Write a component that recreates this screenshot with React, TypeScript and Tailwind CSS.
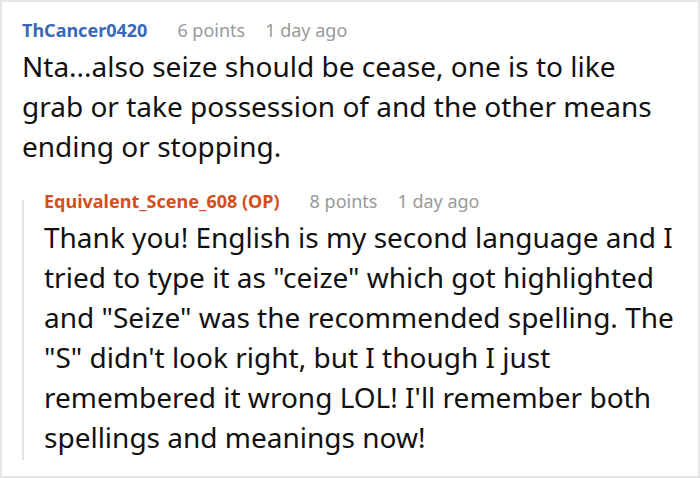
import React from 'react';

const font = { fontFamily: '"Noto Sans", "Open Sans", sans-serif' };

interface CommentHeaderProps {
  author: string;
  authorColor: string;
  points: string;
  time: string;
}

const CommentHeader: React.FC<CommentHeaderProps> = ({ author, authorColor, points, time }) => (
  <div className="flex items-baseline h-[24px] text-[18px] leading-[24px]">
    <span className={`font-bold ${authorColor}`}>{author}</span>
    <span className="ml-[30px] text-[#999999]">{points}</span>
    <span className="ml-[20px] text-[#999999]">{time}</span>
  </div>
);

export default function App() {
  return (
    <div className="w-[700px] h-[478px] bg-white border-2 border-[#e6e6e6] overflow-hidden" style={font}>
      <div className="pl-[20px] pt-[16px]">
        <CommentHeader author="ThCancer0420" authorColor="text-[#3a68b8]" points="6 points" time="1 day ago" />
        <p className="mt-[4px] text-[28px] leading-[40px] text-[#111111] pr-[30px]">
          Nta...also seize should be cease, one is to like grab or take possession of and the other means ending or stopping.
        </p>
        <div className="mt-[23px] flex">
          <div className="w-[2px] shrink-0 bg-[#e3e3e3] mt-[11px] h-[260px]" />
          <div className="pl-[20px]">
            <CommentHeader author="Equivalent_Scene_608 (OP)" authorColor="text-[#d24f1d]" points="8 points" time="1 day ago" />
            <p className="mt-[4px] text-[28px] leading-[40px] text-[#111111]">
              Thank you! English is my second language and I tried to type it as "ceize" which got highlighted and "Seize" was the recommended spelling. The "S" didn't look right, but I though I just remembered it wrong LOL! I'll remember both spellings and meanings now!
            </p>
          </div>
        </div>
      </div>
    </div>
  );
}
